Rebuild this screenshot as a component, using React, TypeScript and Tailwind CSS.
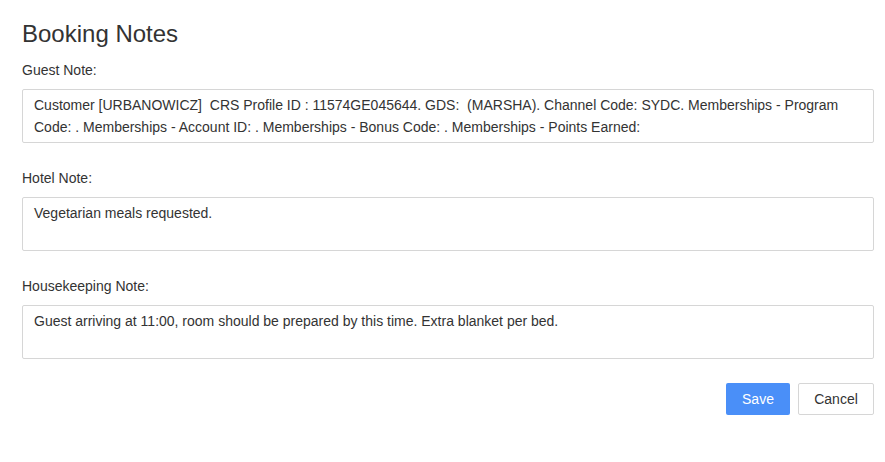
export default function App() {
  const notes = [
    {
      label: "Guest Note:",
      text: "Customer [URBANOWICZ]  CRS Profile ID : 11574GE045644. GDS:  (MARSHA). Channel Code: SYDC. Memberships - Program Code: . Memberships - Account ID: . Memberships - Bonus Code: . Memberships - Points Earned:",
    },
    { label: "Hotel Note:", text: "Vegetarian meals requested." },
    {
      label: "Housekeeping Note:",
      text: "Guest arriving at 11:00, room should be prepared by this time. Extra blanket per bed.",
    },
  ];

  return (
    <div className="min-h-screen bg-white pl-[22px] pr-[11px] pt-[20px] font-['Liberation_Sans',Arial,sans-serif] text-[#333]">
      <h1 className="text-[24px] leading-[28px] font-normal">Booking Notes</h1>

      {notes.map((n, i) => (
        <div key={n.label} className={i === 0 ? "mt-[12px]" : "mt-[25px]"}>
          <div className="text-[14px] leading-[20px] mb-[9px]">{n.label}</div>
          <div className="h-[54px] border border-[#d6d6d6] rounded-[2px] px-[11px] py-[4px] text-[14px] leading-[22px] whitespace-pre-wrap">
            {n.text}
          </div>
        </div>
      ))}

      <div className="flex justify-end gap-2 mt-[24px]">
        <button className="h-[32px] w-[64px] rounded-[2px] bg-[#4a8ff8] text-white text-[14px]">
          Save
        </button>
        <button className="h-[32px] w-[76px] rounded-[2px] border border-[#d6d6d6] bg-white text-[#333] text-[14px]">
          Cancel
        </button>
      </div>
    </div>
  );
}
